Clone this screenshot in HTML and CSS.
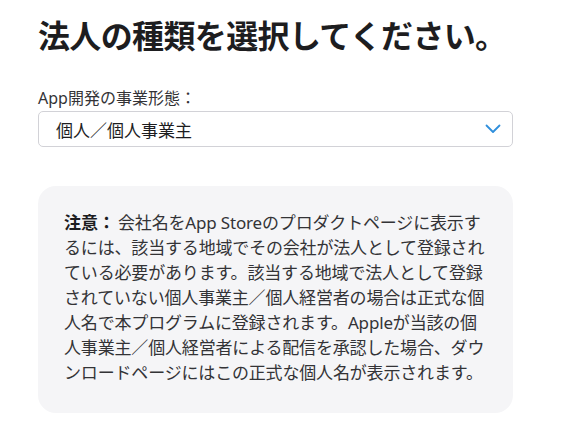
FILE: index.html
```html
<!DOCTYPE html>
<html lang="ja">
<head>
<meta charset="utf-8">
<link rel="stylesheet" href="styles.css">
</head>
<body>
<main class="page">
  <h1 class="title">法人の種類を選択してください。</h1>
  <div class="field">
    <label class="field-label">App開発の事業形態：</label>
    <div class="select">
      <span class="select-value">個人／個人事業主</span>
      <svg class="chevron" width="16" height="10" viewBox="0 0 16 10"><path d="M1.5 1.5 L8 8 L14.5 1.5" fill="none" stroke="#2f8fdc" stroke-width="1.8" stroke-linecap="round" stroke-linejoin="round"/></svg>
    </div>
  </div>
  <div class="notice">
    <p class="notice-text"><strong class="notice-label">注意：</strong>会社名をApp Storeのプロダクトページに表示するには、該当する地域でその会社が法人として登録されている必要があります。該当する地域で法人として登録されていない個人事業主／個人経営者の場合は正式な個人名で本プログラムに登録されます。Appleが当該の個人事業主／個人経営者による配信を承認した場合、ダウンロードページにはこの正式な個人名が表示されます。</p>
  </div>
</main>
</body>
</html>
```
FILE: styles.css
```css
html, body {
  margin: 0;
  padding: 0;
  background: #ffffff;
}
body {
  font-family: "Noto Sans", "Noto Sans CJK JP", sans-serif;
  color: #1d1d1f;
}
.page {
  padding: 16px 0 0 38px;
  width: 475px;
}
.title {
  margin: 0;
  font-family: "Noto Sans CJK JP", sans-serif;
  font-size: 32px;
  line-height: 36px;
  font-weight: 700;
  letter-spacing: -0.02em;
  white-space: nowrap;
}
.field {
  margin-top: 36px;
  display: flex;
  flex-direction: column;
}
.field-label {
  font-size: 16px;
  line-height: 20px;
  color: #333336;
  margin-bottom: 3px;
}
.select {
  height: 36px;
  box-sizing: border-box;
  border: 1px solid #d2d2d7;
  border-radius: 5px;
  display: flex;
  align-items: center;
  justify-content: space-between;
  padding: 0 11px 0 17px;
}
.select-value {
  font-size: 17px;
  color: #1d1d1f;
}
.chevron {
  display: block;
}
.notice {
  margin-top: 39px;
  background: #f5f5f7;
  border-radius: 18px;
  height: 227px;
  box-sizing: border-box;
  padding: 24px 24px 26px 26px;
}
.notice-text {
  margin: 0;
  font-size: 17px;
  line-height: 25px;
  letter-spacing: -0.01em;
  color: #333336;
}
.notice-label {
  font-weight: 700;
  color: #1d1d1f;
  letter-spacing: 0;
  margin-right: 3px;
}
```
